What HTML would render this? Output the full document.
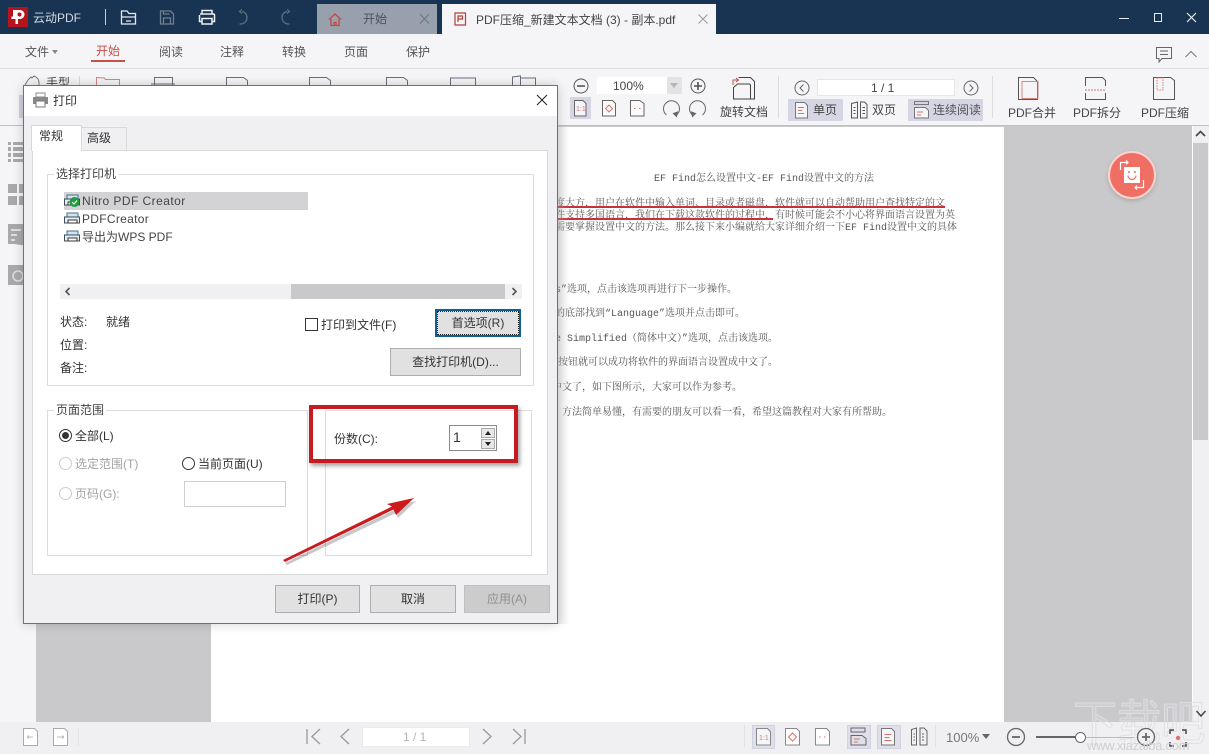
<!DOCTYPE html>
<html lang="zh"><head><meta charset="utf-8"><title>云动PDF</title>
<style>
html,body{margin:0;padding:0;background:#f0eff2}
body{width:1209px;height:752px;overflow:hidden;position:relative;background:#c9c8ca;font-family:"Liberation Sans","Noto Sans CJK SC",sans-serif;font-size:12px;color:#555}
div,span,svg{position:absolute;box-sizing:border-box}
.t{white-space:nowrap;line-height:16px}
.d{color:#333}
.g{color:#a3a3a3}
.pl{font-family:"Liberation Mono","Noto Serif CJK SC",serif;font-size:10px;line-height:12px;color:#555;white-space:nowrap;left:555px}
.btn{background:#e1e1e1;border:1px solid #adadad;text-align:center;color:#333;font-size:12px;line-height:26px;height:28px}
</style></head><body>

<!-- title bar -->
<div style="left:0;top:0;width:1209px;height:34px;background:#193353"></div>
<div style="left:8px;top:7px;width:20px;height:20px;background:#b5141b"></div>
<svg style="left:8px;top:7px" width="20" height="20" viewBox="0 0 20 20"><path d="M5 3h7a4.500 4.500 0 0 1 0 9H10v5H7.500v-5H3.500V9.500H5z" fill="#fff"/><circle cx="11.500" cy="7.500" r="2" fill="#b5141b"/></svg>
<div class="t" style="left:33px;top:10px;color:#d5dbe3;font-size:12px">云动PDF</div>
<div style="left:105px;top:9px;width:1px;height:16px;background:#c8ced6"></div>
<svg style="left:115px;top:6px" width="185" height="22" viewBox="0 0 185 22" fill="none" stroke-width="1.300">
<path d="M6.500 5h5.500l2 2.500h6.500V18h-14zM6.500 11h14M11 15h5" stroke="#e6eaef"/>
<path d="M45.500 5h10l3 3v10h-13zM48.500 18v-6h7v6M48.500 5v3h6" stroke="#71808f"/>
<path d="M87 8V4.500h10V8M85 8h14a1 1 0 0 1 .5 1v6.500H97M87 15.500h-2.500V9M87 12.500h10V18H87z" stroke="#eef0f3" stroke-width="1.500"/>
<path d="M127 5.500a6 6 0 0 1 5 6 6.500 6.500 0 0 1-6 6.500h-1.500M127 3.500l-2.500 2 2.500 2" stroke="#5d6e80"/>
<path d="M172 5.500a6 6 0 0 0-5 6 6.500 6.500 0 0 0 6 6.500h1.500M172 3.500l2.500 2-2.500 2" stroke="#5d6e80"/>
</svg>

<!-- tabs -->
<div style="left:317px;top:4px;width:120px;height:30px;background:#98a0ad"></div>
<svg style="left:327px;top:12px" width="16" height="15" viewBox="0 0 16 15" fill="none" stroke="#c8483f" stroke-width="1.300"><path d="M2 7.500L8 2l6 5.500M4 7v6.500h8V7M7 13.500v-3h2v3"/></svg>
<div class="t" style="left:363px;top:11px;color:#4b5260;font-size:12px">开始</div>
<svg style="left:418px;top:13px" width="13" height="12" viewBox="0 0 13 12" stroke="#6d7482" stroke-width="1.100"><path d="M2 1l9 9.500M11 1l-9 9.500"/></svg>
<div style="left:442px;top:4px;width:274px;height:30px;background:#f5f4f7"></div>
<svg style="left:454px;top:12px" width="13" height="15" viewBox="0 0 13 15" fill="none" stroke="#b2403c" stroke-width="1.200"><path d="M1 1h10.500v12H1zM4 10V4h4.500v3H4"/></svg>
<div class="t" style="left:476px;top:12px;color:#444;font-size:12px">PDF压缩_新建文本文档 (3) - 副本.pdf</div>
<svg style="left:697px;top:13px" width="12" height="12" viewBox="0 0 12 12" stroke="#9a9a9a" stroke-width="1"><path d="M1.500 1.500l9 9M10.500 1.500l-9 9"/></svg>

<!-- window buttons -->
<div style="left:1119px;top:18px;width:10px;height:1px;background:#e8ebef"></div>
<div style="left:1154px;top:13px;width:8px;height:9px;border:1.500px solid #e8ebef"></div>
<svg style="left:1186px;top:12px" width="11" height="11" viewBox="0 0 11 11" stroke="#e8ebef" stroke-width="1.200"><path d="M1 1l9 9M10 1l-9 9"/></svg>

<!-- menu -->
<div style="left:0;top:34px;width:1209px;height:35px;background:#f5f4f7;border-bottom:1px solid #dcdbde"></div>
<div class="t" style="left:25px;top:44px">文件</div>
<div style="left:52px;top:50px;border:3.500px solid transparent;border-top:4px solid #888"></div>
<div class="t" style="left:96px;top:43px;color:#c8504a">开始</div>
<div style="left:91px;top:60px;width:34px;height:2px;background:#c8504a"></div>
<div class="t" style="left:159px;top:44px">阅读</div>
<div class="t" style="left:220px;top:44px">注释</div>
<div class="t" style="left:282px;top:44px">转换</div>
<div class="t" style="left:344px;top:44px">页面</div>
<div class="t" style="left:406px;top:44px">保护</div>
<svg style="left:1155px;top:46px" width="20" height="18" viewBox="0 0 20 18" fill="none" stroke="#666"><path d="M1.500 1.500h15v11H7l-3 3.500v-3.500H1.500zM5 5h8M5 8.500h8"/></svg>
<svg style="left:1184px;top:49px" width="14" height="10" viewBox="0 0 14 10" fill="none" stroke="#777"><path d="M1.500 8L7 2.500 12.500 8"/></svg>

<!-- toolbar -->
<div style="left:0;top:69px;width:1209px;height:57px;background:#f5f4f7;border-bottom:1px solid #c0bfc2"></div>
<div style="left:19px;top:95px;width:6px;height:23px;background:#d0d0dd"></div>
<svg style="left:0;top:74px" width="560" height="12" viewBox="0 0 560 12" fill="none" stroke="#6a6f80">
<path d="M25 11L28 6l3-3 1 1 2-2 2 1 2 2 1 3v3" stroke="#777"/>
<path d="M96.500 12V3.500l8 .5 1 1.500h14V12" stroke="#c98a85"/>
<path d="M154.500 12V3.500h18V12M151 10h24"/>
<path d="M226.500 12V3.500h17l4 3V12"/>
<path d="M309.500 12V3.500h17l4 3V12"/>
<path d="M386.500 12V3.500h17l4 3V12"/>
<path d="M450.500 12V4h25v8"/>
<path d="M512.500 12V3l8-1v10M520 4h15.500v8"/>
</svg>
<div class="t" style="left:46px;top:75px;color:#444">手型</div>
<div style="left:79px;top:76px;width:1px;height:12px;background:#d8d7da"></div>

<svg style="left:570px;top:76px" width="24" height="20" viewBox="0 0 24 20" fill="none" stroke="#555"><circle cx="11" cy="10" r="7"/><path d="M7 10h8" stroke-width="1.600"/></svg>
<div style="left:597px;top:77px;width:70px;height:17px;background:#fff"></div>
<div class="t" style="left:613px;top:78px;color:#444;font-size:12px">100%</div>
<div style="left:667px;top:77px;width:15px;height:17px;background:#e3e2e5"></div>
<div style="left:670px;top:83px;border:4px solid transparent;border-top:5px solid #b5b5b5"></div>
<svg style="left:687px;top:76px" width="22" height="20" viewBox="0 0 22 20" fill="none" stroke="#555"><circle cx="11" cy="10" r="7"/><path d="M7 10h8M11 6v8" stroke-width="1.600"/></svg>

<svg style="left:728px;top:74px" width="32" height="28" viewBox="0 0 32 28" fill="none" stroke="#444"><path d="M10.500 3.500h12l4 4v17.500h-4"/><path d="M5.500 13.500l4-3.500h12l1 1v14H5.500z" fill="#f5f4f7"/><path d="M5 11V6h5M8 4l2.500 2L8 8" stroke="#c8504a"/></svg>
<div class="t" style="left:720px;top:104px;color:#444">旋转文档</div>

<div style="left:570px;top:97px;width:21px;height:22px;background:#d5d5e3"></div>
<svg style="left:570px;top:97px" width="140" height="24" viewBox="0 0 140 24" fill="none" stroke="#666">
<path d="M4.500 3.500h8.500l3 3v12.500H4.500z" fill="#f5f4f7"/><text x="6" y="14" font-size="7" fill="#c8847f" stroke="none" font-family="Liberation Sans">1:1</text>
<path d="M32.500 3.500h10l3 3v12.500H32.500z" fill="#fbfbfc"/><path d="M39 8l3.500 3.500L39 15l-3.500-3.500z" stroke="#d8736c"/>
<path d="M60.500 3.500h9l4.500 3v12.500H60.500z" fill="#fbfbfc"/><path d="M64 11.500h1.500M69 11.500h1.500" stroke="#d8736c"/>
<path d="M96.500 18A8 8 0 1 1 106.500 18"/><path d="M103.500 16.500l3 3 1-4.500z" fill="#666"/>
<path d="M122.500 18A8 8 0 1 1 132.500 18"/><path d="M125.500 16.500l-3 3-1-4.500z" fill="#666"/>
</svg>

<div style="left:778px;top:76px;width:1px;height:42px;background:#dcdbde"></div>
<svg style="left:793px;top:79px" width="18" height="18" viewBox="0 0 18 18" fill="none" stroke="#666"><circle cx="9" cy="9" r="7"/><path d="M10.500 5.500L7 9l3.500 3.500"/></svg>
<div style="left:817px;top:79px;width:138px;height:17px;background:#fff;border:1px solid #e6e5e8"></div>
<div class="t" style="left:871px;top:80px;color:#444">1 / 1</div>
<svg style="left:962px;top:79px" width="18" height="18" viewBox="0 0 18 18" fill="none" stroke="#666"><circle cx="9" cy="9" r="7"/><path d="M7.500 5.500L11 9l-3.500 3.500"/></svg>
<div style="left:788px;top:99px;width:55px;height:22px;background:#d5d5e3"></div>
<svg style="left:793px;top:100px" width="18" height="20" viewBox="0 0 18 20" fill="none" stroke="#777"><path d="M2.500 2.500h9l3 3v12.500h-12z" fill="#f5f4f7"/><path d="M5 7.500h6M5 10.500h4M5 13.500h6" stroke="#d8736c"/></svg>
<div class="t" style="left:813px;top:102px;color:#444">单页</div>
<svg style="left:850px;top:100px" width="20" height="20" viewBox="0 0 20 20" fill="none" stroke="#555"><path d="M1.500 3.500l6-1.500v16h-6zM10.500 2h4l2.500 2.500V18h-6.500zM3.500 7.500h2M3.500 10.500h2M3.500 13.500h2M12.500 7.500h2.500M12.500 10.500h2.500M12.500 13.500h2.500"/></svg>
<div class="t" style="left:872px;top:102px;color:#444">双页</div>
<div style="left:908px;top:99px;width:75px;height:22px;background:#d5d5e3"></div>
<svg style="left:913px;top:100px" width="18" height="20" viewBox="0 0 18 20" fill="none" stroke="#777"><path d="M1.500 1.500h14v3h-14z"/><path d="M1.500 7.500h11l3 3v7.500h-14z" fill="#f5f4f7"/><path d="M4 12h6M4 15h4" stroke="#d8736c"/></svg>
<div class="t" style="left:933px;top:102px;color:#555">连续阅读</div>

<div style="left:992px;top:76px;width:1px;height:42px;background:#dcdbde"></div>
<svg style="left:1016px;top:75px" width="28" height="26" viewBox="0 0 28 26" fill="none" stroke="#555"><path d="M2.500 2.500h15l4 4v18H2.500z"/><path d="M6 6.500h16v17H6z" stroke="#d8867f"/></svg>
<div class="t" style="left:1008px;top:105px;color:#444">PDF合并</div>
<svg style="left:1083px;top:75px" width="26" height="26" viewBox="0 0 26 26" fill="none" stroke="#555"><path d="M2.500 11V2.500h17l3 3V11M2.500 18v6.500h20V18"/><path d="M2 15h21" stroke="#d8736c" stroke-dasharray="2 1"/></svg>
<div class="t" style="left:1073px;top:105px;color:#444">PDF拆分</div>
<svg style="left:1151px;top:75px" width="26" height="26" viewBox="0 0 26 26" fill="none" stroke="#555"><path d="M2.500 2.500h17l4 3v19H2.500z"/><path d="M6 3h6v12H6z" stroke="#d8867f" stroke-dasharray="1.500 1"/></svg>
<div class="t" style="left:1141px;top:105px;color:#444">PDF压缩</div>

<!-- left sidebar -->
<div style="left:0;top:126px;width:36px;height:596px;background:#f5f4f7"></div>
<svg style="left:8px;top:142px" width="20" height="145" viewBox="0 0 20 145" fill="#a9a8ab">
<path d="M0 0h3v3H0zM5 0h15v3H5zM0 5h3v4H0zM5 5h15v4H5zM0 11h3v4H0zM5 11h15v4H5zM0 17h3v3H0zM5 17h15v3H5z"/>
<path d="M0 42h9v9H0zM11 42h9v9h-9zM0 54h9v9H0zM11 54h9v9h-9z"/>
<path d="M0 82h20v22l-14-2H0z"/><path d="M3 88h10M3 93h6M3 98h4" stroke="#eee" stroke-width="1.500"/>
<path d="M0 123h20v20H0z"/><circle cx="10" cy="134" r="5" fill="none" stroke="#ddd" stroke-width="1.500"/>
</svg>

<!-- page -->
<div style="left:211px;top:127px;width:793px;height:595px;background:#fff"></div>

<div class="pl" style="left:654px;top:174px">EF Find怎么设置中文-EF Find设置中文的方法</div>
<div class="pl" style="top:199px">度大方，用户在软件中输入单词、目录或者磁盘，软件就可以自动帮助用户查找特定的文</div>
<div class="pl" style="top:211px">件支持多国语言，我们在下载这款软件的过程中，有时候可能会不小心将界面语言设置为英</div>
<div class="pl" style="top:223px">需要掌握设置中文的方法。那么接下来小编就给大家详细介绍一下EF Find设置中文的具体</div>
<div class="pl" style="top:285px">s”选项，点击该选项再进行下一步操作。</div>
<div class="pl" style="top:309px">的底部找到“Language”选项并点击即可。</div>
<div class="pl" style="top:334px">e Simplified（简体中文）”选项，点击该选项。</div>
<div class="pl" style="top:358px;left:558px">按钮就可以成功将软件的界面语言设置成中文了。</div>
<div class="pl" style="top:383px;left:552px">中文了，如下图所示，大家可以作为参考。</div>
<div class="pl" style="top:408px;left:562px">方法简单易懂，有需要的朋友可以看一看，希望这篇教程对大家有所帮助。</div>
<div style="left:558px;top:206px;width:387px;height:1.500px;background:#c8303a"></div>
<div style="left:558px;top:218px;width:215px;height:1.500px;background:#c8303a"></div>
<div style="left:558px;top:127px;width:12px;height:497px;background:linear-gradient(90deg,rgba(190,190,190,.35),rgba(255,255,255,0))"></div>

<!-- floating button -->
<div style="left:1108px;top:151px;width:48px;height:48px;border-radius:50%;background:#ef6f64;border:2px solid #fbd3cd;box-shadow:0 2px 4px rgba(0,0,0,.15)"></div>
<svg style="left:1118px;top:160px" width="30" height="30" viewBox="0 0 30 30" fill="none" stroke="#fff"><path d="M2.500 10V2.500H10M8 .5l2 2-2 2M25.500 20v7.500H17M19 25.500l-2 2 2 2" stroke-width="1.200"/><path d="M6 7h16v16H6z" fill="#fff" stroke="none"/><circle cx="11" cy="12" r="1" fill="#ef6f64" stroke="none"/><circle cx="17" cy="12" r="1" fill="#ef6f64" stroke="none"/><path d="M10 15.500a4 4 0 0 0 8 0" stroke="#ef6f64" stroke-width="1.200"/></svg>

<!-- scrollbar -->
<div style="left:1192px;top:126px;width:1px;height:596px;background:#fff"></div>
<div style="left:1193px;top:126px;width:16px;height:596px;background:#f0eff2"></div>
<div style="left:1193px;top:143px;width:15px;height:297px;background:#c9c8ca"></div>
<svg style="left:1194px;top:129px" width="13" height="10" viewBox="0 0 13 10" fill="none" stroke="#444" stroke-width="1.600"><path d="M2 7l4.500-4.500L11 7"/></svg>

<!-- bottom bar -->
<div style="left:0;top:722px;width:1209px;height:30px;background:#f0eff2"></div>
<!-- watermark -->
<div class="t" style="left:1073px;top:694px;width:134px;height:52px;font-size:44px;line-height:46px;letter-spacing:0;color:rgba(255,255,255,.14);-webkit-text-stroke:1px rgba(222,222,226,.9);overflow:hidden;font-family:'Noto Sans CJK SC',sans-serif;transform:scaleY(1.1);transform-origin:top">下载吧</div>

<svg style="left:22px;top:727px" width="50" height="20" viewBox="0 0 50 20" fill="#fff" stroke="#aaa"><path d="M1.500 1.500h11l3 3v14h-14zM31.500 1.500h11l3 3v14h-14z"/><path d="M5 10h6M5 10l2-1.500M5 10l2 1.500M35 10h7M42 10l-2-1.500M42 10l-2 1.500" stroke="#bbb" fill="none"/></svg>
<div style="left:78px;top:728px;width:1px;height:18px;background:#e2e1e4"></div>
<svg style="left:305px;top:727px" width="50" height="20" viewBox="0 0 50 20" fill="none" stroke="#999" stroke-width="1.300"><path d="M2 2v15M15 2L7 9.500 15 17M44 2l-8 7.500 8 7.500"/></svg>
<div style="left:362px;top:727px;width:108px;height:20px;background:#fff;border:1px solid #ebeaed"></div>
<div class="t" style="left:403px;top:729px;color:#b5b5b5;font-size:12px">1 / 1</div>
<svg style="left:480px;top:727px" width="50" height="20" viewBox="0 0 50 20" fill="none" stroke="#999" stroke-width="1.300"><path d="M3 2l8 7.500L3 17M33 2l8 7.500L33 17M45 2v15"/></svg>

<div style="left:744px;top:725px;width:1px;height:22px;background:#e2e1e4"></div>
<div style="left:752px;top:725px;width:23px;height:24px;background:#dfdfea;border:1px solid #d2d2e0"></div>
<div style="left:847px;top:725px;width:24px;height:24px;background:#dfdfea;border:1px solid #d2d2e0"></div>
<div style="left:877px;top:725px;width:24px;height:24px;background:#dfdfea;border:1px solid #d2d2e0"></div>
<svg style="left:751px;top:725px" width="180" height="24" viewBox="0 0 180 24" fill="none" stroke="#888">
<path d="M5.500 3.500h11l3 3v13.500h-14z" fill="#f5f4f7"/><text x="8" y="15" font-size="7" fill="#c8847f" stroke="none" font-family="Liberation Sans">1:1</text>
<path d="M34.500 3.500h11l3 3v13.500h-14z" fill="#fff"/><path d="M41.500 8l4 4-4 4-4-4z" stroke="#d8736c"/>
<path d="M64.500 3.500h11l3 3v13.500h-14z" fill="#fff"/><path d="M68 12h1.500M73 12h1.500" stroke="#d8736c"/>
<path d="M100 3h14v4h-14zM100 10.500h11l4 3V20h-15z" stroke="#666"/><path d="M103 14h6M103 17h4" stroke="#d8736c"/>
<path d="M130.500 3.500h10l3 3v13.500h-13z" fill="#f5f4f7" stroke="#777"/><path d="M133.500 9.500h7M133.500 12.500h5M133.500 15.500h7" stroke="#d8736c"/>
<path d="M160.500 4.500l5-1.500v17h-5zM169 3h4l3 3v14h-7zM162.500 9h1.500M162.500 12h1.500M162.500 15h1.500M171 9h2M171 12h2M171 15h2" stroke="#666"/>
</svg>
<div style="left:935px;top:725px;width:1px;height:22px;background:#e2e1e4"></div>
<div class="t" style="left:946px;top:730px;color:#777;font-size:13px">100%</div>
<div style="left:982px;top:734px;border:4.500px solid transparent;border-top:5px solid #666"></div>
<svg style="left:1005px;top:726px" width="22" height="22" viewBox="0 0 22 22" fill="none" stroke="#666" stroke-width="1.300"><circle cx="11" cy="11" r="8.500"/><path d="M7 11h8" stroke-width="1.800"/></svg>
<div style="left:1036px;top:736px;width:44px;height:2px;background:#666"></div>
<div style="left:1080px;top:737px;width:54px;height:1px;background:#bbb"></div>
<div style="left:1075px;top:732px;width:11px;height:11px;border-radius:50%;background:#fff;border:1px solid #666"></div>
<svg style="left:1135px;top:726px" width="22" height="22" viewBox="0 0 22 22" fill="#f0eff2" stroke="#666" stroke-width="1.300"><circle cx="11" cy="11" r="8.500"/><path d="M7 11h8M11 7v8" stroke-width="1.800"/></svg>
<svg style="left:1168px;top:728px" width="20" height="20" viewBox="0 0 20 20" fill="none" stroke="#444" stroke-width="1.500"><path d="M2 6V2h4M14 2h4v4M2 14v4h4M14 18h4v-4"/><circle cx="10" cy="10" r="2.200" fill="#df7070" stroke="none"/></svg>
<svg style="left:1195px;top:709px" width="12" height="10" viewBox="0 0 12 10" fill="none" stroke="#444" stroke-width="1.500"><path d="M1.500 2L6 7l4.500-5"/></svg>
<div class="t" style="left:1087px;top:738px;color:rgba(205,205,210,.95);font-size:13px;letter-spacing:-.3px">www.xiazaiba.com</div>

<!-- dialog -->
<div style="left:23px;top:85px;width:535px;height:539px;background:#f0eff2;border:1px solid #3c7fb5;box-shadow:0 0 10px rgba(0,0,0,.18)"></div>
<div style="left:24px;top:86px;width:533px;height:30px;background:#fff"></div>
<svg style="left:32px;top:92px" width="17" height="16" viewBox="0 0 17 16"><path d="M4 1h9v4H4z" fill="#fff" stroke="#888"/><path d="M1 5h15v7H1z" fill="#888"/><path d="M4 9h9v6H4z" fill="#fff" stroke="#777"/></svg>
<div class="t" style="left:53px;top:93px;color:#333">打印</div>
<svg style="left:535px;top:93px" width="14" height="14" viewBox="0 0 14 14" stroke="#222"><path d="M2 2l10 10M12 2L2 12"/></svg>

<!-- tabs -->
<div style="left:32px;top:150px;width:516px;height:425px;background:#fff;border:1px solid #d9d9d9"></div>
<div style="left:81px;top:127px;width:46px;height:24px;background:#f0eff2;border:1px solid #d9d9d9"></div>
<div class="t" style="left:87px;top:130px;color:#333">高级</div>
<div style="left:31px;top:125px;width:51px;height:26px;background:#fff;border:1px solid #d9d9d9;border-bottom:0"></div>
<div class="t" style="left:39px;top:128px;color:#333">常规</div>

<!-- printer group -->
<div style="left:47px;top:174px;width:487px;height:212px;border:1px solid #dcdcdc"></div>
<div class="t" style="left:54px;top:166px;background:#fff;padding:0 2px;color:#444">选择打印机</div>
<div style="left:64px;top:192px;width:244px;height:18px;background:#d3d2d5"></div>
<svg style="left:64px;top:194px" width="18" height="52" viewBox="0 0 18 52"><path d="M3 1h11v4H3z" fill="#cfe3f2" stroke="#48728f"/><path d="M.5 5h15v6H.5z" fill="#e9eef2" stroke="#3e4c57"/><path d="M4 8h9v3H4z" fill="#fff" stroke="#333"/><g transform="translate(0,18)"><path d="M3 1h11v4H3z" fill="#cfe3f2" stroke="#48728f"/><path d="M.5 5h15v6H.5z" fill="#e9eef2" stroke="#3e4c57"/><path d="M4 8h9v3H4z" fill="#fff" stroke="#333"/></g><g transform="translate(0,36)"><path d="M3 1h11v4H3z" fill="#cfe3f2" stroke="#48728f"/><path d="M.5 5h15v6H.5z" fill="#e9eef2" stroke="#3e4c57"/><path d="M4 8h9v3H4z" fill="#fff" stroke="#333"/></g><circle cx="10.500" cy="8" r="5" fill="#1e9a3f"/><path d="M8 8l2 2 3-3.500" fill="none" stroke="#fff" stroke-width="1.200"/></svg>
<div class="t" style="left:82px;top:193px;font-size:12px;color:#444;letter-spacing:.45px">Nitro PDF Creator</div>
<div class="t" style="left:82px;top:211px;font-size:12px;color:#444;letter-spacing:.3px">PDFCreator</div>
<div class="t" style="left:82px;top:229px;font-size:12px;color:#444">导出为WPS PDF</div>

<div style="left:60px;top:284px;width:462px;height:15px;background:#f0eff2"></div>
<div style="left:291px;top:284px;width:214px;height:15px;background:#c9c8ca"></div>
<svg style="left:62px;top:286px" width="12" height="11" viewBox="0 0 12 11" fill="none" stroke="#555" stroke-width="1.600"><path d="M7.500 2L4 5.500 7.500 9"/></svg>
<svg style="left:508px;top:286px" width="12" height="11" viewBox="0 0 12 11" fill="none" stroke="#555" stroke-width="1.600"><path d="M4.500 2L8 5.500 4.500 9"/></svg>

<div class="t d" style="left:60px;top:314px">状态:</div>
<div class="t d" style="left:106px;top:314px">就绪</div>
<div class="t d" style="left:60px;top:337px">位置:</div>
<div class="t d" style="left:60px;top:360px">备注:</div>
<div style="left:305px;top:318px;width:13px;height:13px;background:#fff;border:1px solid #333"></div>
<div class="t d" style="left:321px;top:317px">打印到文件(F)</div>
<div style="left:435px;top:309px;width:86px;height:28px;background:#e1e1e1;border:2px solid #0f5f94;outline:1px dotted #222;outline-offset:-3px;text-align:center;line-height:24px;color:#333">首选项(R)</div>
<div class="btn" style="left:390px;top:348px;width:131px">查找打印机(D)...</div>

<!-- range group -->
<div style="left:47px;top:410px;width:261px;height:146px;border:1px solid #dcdcdc"></div>
<div class="t" style="left:54px;top:402px;background:#fff;padding:0 2px;color:#444">页面范围</div>
<div style="left:59px;top:429px;width:13px;height:13px;border-radius:50%;background:#fff;border:1px solid #333"></div>
<div style="left:62px;top:432px;width:7px;height:7px;border-radius:50%;background:#333"></div>
<div class="t d" style="left:75px;top:428px">全部(L)</div>
<div style="left:59px;top:457px;width:13px;height:13px;border-radius:50%;background:#fff;border:1px solid #ccc"></div>
<div class="t g" style="left:75px;top:456px">选定范围(T)</div>
<div style="left:182px;top:457px;width:13px;height:13px;border-radius:50%;background:#fff;border:1px solid #333"></div>
<div class="t d" style="left:198px;top:456px">当前页面(U)</div>
<div style="left:59px;top:487px;width:13px;height:13px;border-radius:50%;background:#fff;border:1px solid #ccc"></div>
<div class="t g" style="left:75px;top:486px">页码(G):</div>
<div style="left:184px;top:481px;width:102px;height:26px;background:#fff;border:1px solid #cfcfcf"></div>

<!-- copies group -->
<div style="left:325px;top:410px;width:207px;height:146px;border:1px solid #dcdcdc"></div>
<div class="t d" style="left:334px;top:431px">份数(C):</div>
<div style="left:449px;top:425px;width:48px;height:26px;background:#fff;border:1px solid #8a8a8a"></div>
<div class="t d" style="left:453px;top:429px;font-size:14px">1</div>
<div style="left:481px;top:428px;width:14px;height:10px;background:#e8e8e8;border:1px solid #aaa"></div>
<div style="left:481px;top:439px;width:14px;height:10px;background:#e8e8e8;border:1px solid #aaa"></div>
<div style="left:485px;top:431px;border:3px solid transparent;border-bottom:4px solid #222;border-top:0"></div>
<div style="left:485px;top:442px;border:3px solid transparent;border-top:4px solid #222;border-bottom:0"></div>

<div style="left:309px;top:405px;width:209px;height:58px;border:4px solid #c41c22;box-shadow:2px 3px 4px rgba(0,0,0,.35)"></div>
<svg style="left:0;top:0" width="1209" height="752" viewBox="0 0 1209 752"><path d="M285 563L394 510 389 507 416 501 398 518 396 513 287 565z" fill="#000" opacity=".22"/><path d="M283 560L392 506.500 387 504 414 498 396 515 393.500 509.500 285 562z" fill="#cc1a1f"/></svg>

<!-- dialog buttons -->
<div class="btn" style="left:275px;top:585px;width:85px">打印(P)</div>
<div class="btn" style="left:370px;top:585px;width:86px">取消</div>
<div class="btn" style="left:464px;top:585px;width:86px;background:#cccccc;border-color:#bfbfbf;color:#909090">应用(A)</div>

</body></html>
